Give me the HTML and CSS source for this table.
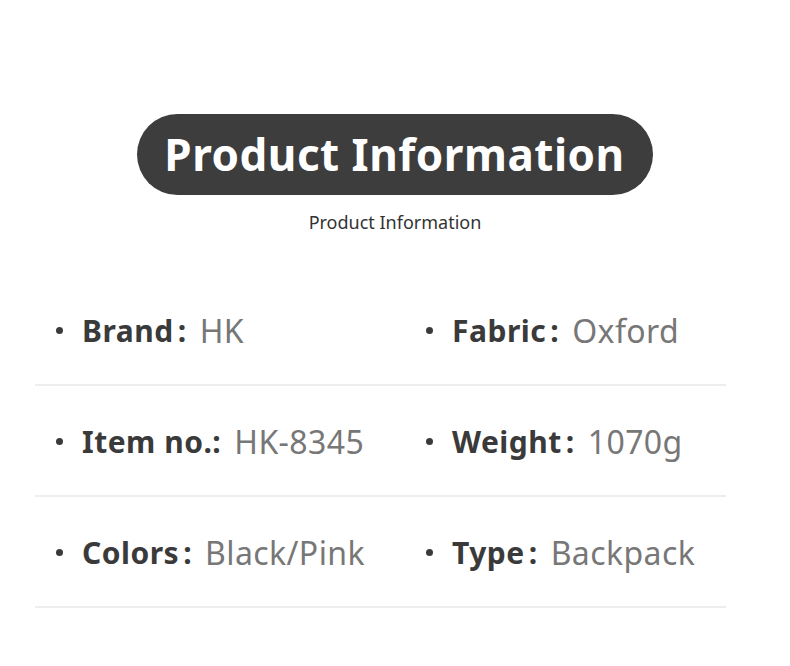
FILE: index.html
```html
<!DOCTYPE html>
<html>
<head>
<meta charset="utf-8">
<link rel="stylesheet" href="styles.css">
</head>
<body>
<div class="page">
  <div class="head">
    <div class="pill">Product Information</div>
    <div class="sub">Product Information</div>
  </div>
  <div class="specs">
    <div class="row">
      <div class="cell"><span class="dot"></span><span class="label">Brand<span class="colon">:</span></span><span class="val">HK</span></div>
      <div class="cell"><span class="dot"></span><span class="label">Fabric<span class="colon">:</span></span><span class="val">Oxford</span></div>
    </div>
    <div class="row">
      <div class="cell"><span class="dot"></span><span class="label">Item no.:</span><span class="val">HK-8345</span></div>
      <div class="cell"><span class="dot"></span><span class="label">Weight<span class="colon">:</span></span><span class="val">1070g</span></div>
    </div>
    <div class="row">
      <div class="cell"><span class="dot"></span><span class="label">Colors<span class="colon">:</span></span><span class="val">Black/Pink</span></div>
      <div class="cell"><span class="dot"></span><span class="label">Type<span class="colon">:</span></span><span class="val">Backpack</span></div>
    </div>
  </div>
</div>
</body>
</html>
```

FILE: styles.css
```css
html, body {
  margin: 0;
  padding: 0;
  background: #fff;
}
body {
  font-family: "Noto Sans", "Open Sans", sans-serif;
  width: 790px;
  height: 666px;
  overflow: hidden;
}
.page {
  padding-top: 114px;
}
.head {
  display: flex;
  flex-direction: column;
  align-items: center;
}
.pill {
  width: 516px;
  height: 81px;
  box-sizing: border-box;
  border-radius: 41px;
  background: #3d3d3d;
  color: #fff;
  font-weight: 700;
  font-size: 44px;
  letter-spacing: 0.5px;
  line-height: 81px;
  text-align: center;
  margin-left: -1px;
}
.sub {
  margin-top: 15px;
  font-size: 18px;
  line-height: 24px;
  color: #333;
}
.specs {
  margin: 41px 0 0 35px;
  width: 691px;
}
.row {
  display: grid;
  grid-template-columns: 370px 1fr;
  height: 109px;
  border-bottom: 2px solid #eeeeee;
}
.cell {
  display: flex;
  align-items: center;
  padding-left: 21px;
  padding-top: 2px;
  font-size: 30px;
}
.dot {
  width: 7px;
  height: 7px;
  border-radius: 50%;
  background: #3a3a3a;
  margin-right: 19px;
}
.label {
  font-weight: 700;
  color: #3a3a3a;
  letter-spacing: 0.5px;
}
.colon {
  margin-left: 4px;
}
.val {
  color: #777;
  font-size: 32px;
  letter-spacing: 0.4px;
  margin-left: 13px;
}
```
